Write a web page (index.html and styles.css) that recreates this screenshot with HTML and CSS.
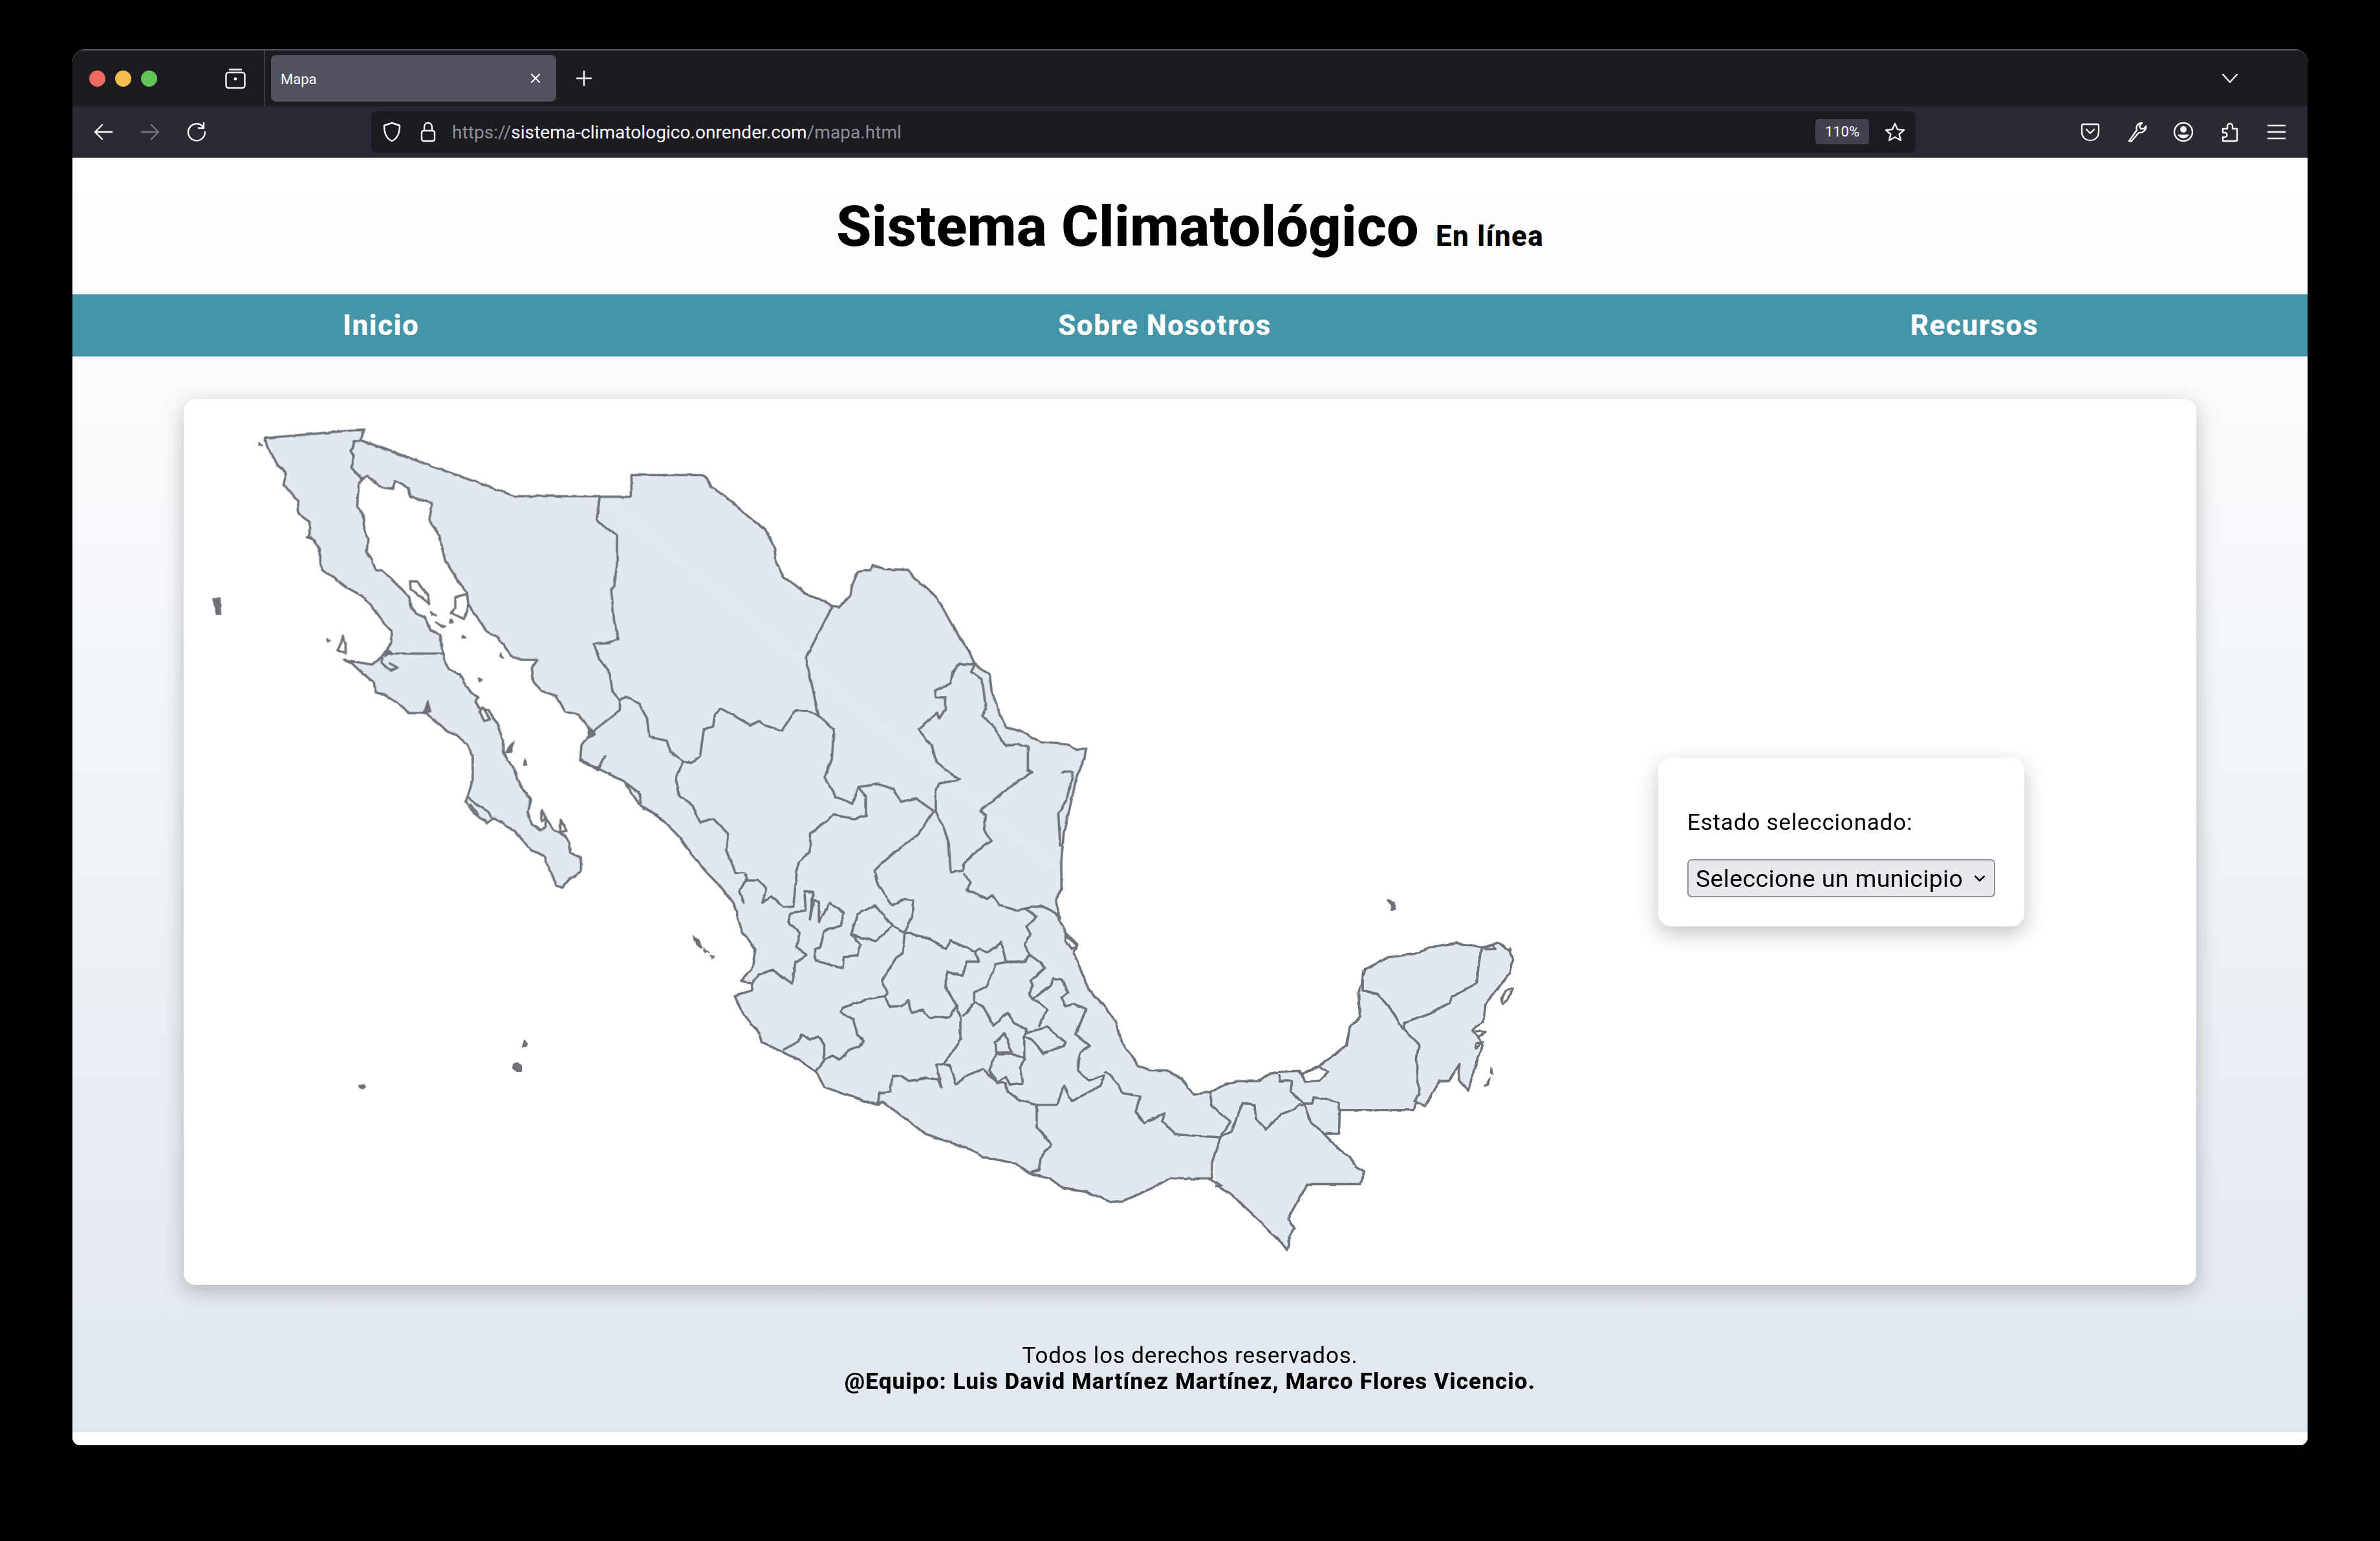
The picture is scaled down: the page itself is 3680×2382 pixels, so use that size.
FILE: index.html
```html
<!DOCTYPE html>
<html lang="es">
<head>
<meta charset="utf-8">
<title>Mapa</title>
<link rel="stylesheet" href="styles.css">
</head>
<body>
<div class="window">
  <div class="tabstrip">
    <div class="lights"><span class="light red"></span><span class="light yellow"></span><span class="light green"></span></div>
    <svg class="fxview ico" viewBox="0 0 32 32"><path d="M7 2.500h18"/><rect x="1.500" y="7" width="29" height="24" rx="4"/><circle class="solid" cx="16" cy="17" r="2.400"/></svg>
    <div class="tab-sep"></div>
    <div class="tab"><span class="tab-title">Mapa</span>
      <svg class="tab-close ico" viewBox="0 0 20 20"><path d="M4 4l12 12M16 4L4 16"/></svg></div>
    <svg class="newtab ico" viewBox="0 0 24 24"><path d="M12 1v22M1 12h22"/></svg>
    <svg class="tabs-menu ico" viewBox="0 0 24 14"><path d="M1 1l11 12L23 1"/></svg>
  </div>
  <div class="toolbar">
    <svg class="tool ico" viewBox="0 0 32 32"><path d="M29 16H4M14 5L3 16l11 11"/></svg>
    <svg class="tool ico dim" viewBox="0 0 32 32"><path d="M3 16h25M18 5l11 11-11 11"/></svg>
    <svg class="tool ico" viewBox="0 0 32 32"><path d="M26 8a13 13 0 1 0 3 8M27 2v8h-8"/></svg>
    <div class="urlbar">
      <svg class="shield ico" viewBox="0 0 28 32"><path d="M14 2l12 4c0 12-3 20-12 24C5 26 2 18 2 6z"/></svg>
      <svg class="lock ico" viewBox="0 0 24 32"><rect x="2" y="14" width="20" height="16" rx="3"/><path d="M6 14V8a6 6 0 0 1 12 0v6"/></svg>
      <div class="url"><span class="dim-text">https://</span>sistema-climatologico.onrender.com<span class="dim-text">/mapa.html</span></div>
      <div class="zoom-badge">110%</div>
      <svg class="star ico" viewBox="0 0 32 32"><path d="M16 3l4 9 10 1-7.500 6.500L25 29l-9-5-9 5 2.500-9.500L2 13l10-1z"/></svg>
    </div>
    <div class="tool-right">
      <svg class="tool ico" viewBox="0 0 32 32"><path d="M5 4h22a2 2 0 0 1 2 2v10c0 8-6 13-13 13S3 24 3 16V6a2 2 0 0 1 2-2z"/><path d="M10 12l6 6 6-6"/></svg>
      <svg class="tool ico" viewBox="0 0 32 32"><path d="M4 30L16 13c-2-6 2-11 8-11l-4 5 2 4 5 0 3-4c1 6-5 11-11 10L7 31z"/></svg>
      <svg class="tool ico" viewBox="0 0 32 32"><circle cx="16" cy="16" r="14"/><circle class="solid" cx="16" cy="12" r="5"/><path class="solid" d="M7 20h18a10 10 0 0 1-18 0z"/></svg>
      <svg class="tool ico" viewBox="0 0 32 32"><path d="M5 30h20a2 2 0 0 0 2-2V11h-7V7a4 4 0 0 0-8 0v4H5v6h3a3 3 0 0 1 0 7H5z"/></svg>
      <svg class="tool ico" viewBox="0 0 32 32"><path d="M3 6h26M3 16h26M3 26h26"/></svg>
    </div>
  </div>
  <div class="page">
    <header class="site-header">
      <h1 class="site-title">Sistema Climatológico <small class="site-sub">En línea</small></h1>
    </header>
    <nav class="site-nav"><a class="nav-link">Inicio</a><a class="nav-link">Sobre Nosotros</a><a class="nav-link">Recursos</a></nav>
    <main class="main">
      <section class="card">
        <svg class="map" viewBox="284 617 2280 1369">
          <defs>
            <filter id="rough" filterUnits="userSpaceOnUse" x="284" y="617" width="2280" height="1369">
              <feTurbulence type="fractalNoise" baseFrequency="0.07" numOctaves="2" seed="4" result="n"/>
              <feDisplacementMap in="SourceGraphic" in2="n" scale="4" xChannelSelector="R" yChannelSelector="G"/>
              <feGaussianBlur stdDeviation="0.5"/>
            </filter>
          </defs>
          <g filter="url(#rough)">
          <g transform="translate(1750 1350) scale(.44643 .39541)">
            <path class="land" d="M270 855L325 825L360 813L440 812L475 783L520 775L580 772L590 785L650 750L690 720L745 672L755 600L790 560L785 470L808 375L890 328L980 315L1050 285L1125 272L1215 292L1270 270L1310 305L1320 340L1310 390L1225 510L1218 580L1180 610L1200 640L1215 675L1185 770L1165 850L1130 805L1135 745L1100 810L1065 812L1035 875L1015 910L985 895L977 925L720 925L718 1018L665 1018L720 1080L755 1110L775 1145L805 1165L790 1215L608 1215L540 1350L563 1385L545 1420L545 1455L538 1470L440 1355L340 1250L290 1220"/>
            <path class="seaisle" d="M590 785L650 755L680 775L650 810L600 815Z"/>
            <path class="line" d="M800 380L800 460L850 470L900 535L940 610M1210 295L1200 370L1195 430L1110 480L1100 505L1030 550L945 585L940 610M940 610L995 670L985 730L995 860L977 895M510 785L515 812L555 812L550 855L595 900L625 900L630 875L680 885L715 895L718 925M305 1035L345 1005L385 895L425 905L430 960L465 1000L515 945L560 925L580 905L600 910L620 975L655 1005L665 1018M135 1185L160 1155L175 1175L205 1170L200 1190M225 1180L270 1195L310 1220L290 1225"/>
            <path class="line" d="M1225 290L1250 280L1260 295L1225 297Z"/>
            <path class="island" d="M885 105L908 115L915 140L900 145L900 125ZM1245 760L1250 785L1242 785ZM1240 800L1222 832L1235 825ZM1310 290L1315 300L1308 300Z"/>
            <path class="seaisle" d="M1320 450L1295 460L1280 490L1285 510L1305 490Z"/>
            <path class="seaisle" d="M1180 615L1225 620L1200 640ZM1190 665L1215 660L1190 685Z"/>
          </g>
          <g transform="translate(850 700) scale(.57398)">
            <path class="fill-only" d="M135 118L1378 1133L425 1133L110 755Z"/>
            <path class="land" d="M135 118H220V60H410L425 68L435 92L470 115L510 150L545 180L580 205L605 255L610 295L630 335L660 355L690 380L720 390L760 412L780 415L810 385L815 355L830 320L865 315L870 302L900 313L965 315L985 340L1040 385L1060 420L1090 475L1130 535L1145 570L1185 595L1190 640L1215 710L1230 740L1270 750L1325 780L1395 785L1420 800L1445 795L1440 825L1420 870L1400 960L1385 1020L1378 1100L1378 1133"/>
            <path class="land" d="M425 1133L385 1085L350 1035L300 985L240 945L200 885L130 850L82 830L85 790L115 748"/>
            <path class="line" d="M85 825L130 855L150 815M200 885L240 915L245 945M250 955L290 975L300 990M1380 860L1410 860L1395 930L1370 970L1375 1060"/>
            <path class="line" d="M762 412L690 552L725 710M190 665L205 655L240 675L262 715L268 765L315 775L325 805L358 832L380 835L405 815L415 745L440 735L445 705L460 688L500 710L540 733L565 722L575 733L625 748L660 695L695 695L730 712L765 745L760 825L740 875L770 925L815 945L830 900L885 892L925 905L945 940L985 930L1035 965M830 900L852 925L852 978L820 985L765 975L745 990L703 1025L700 1075L672 1100L662 1133M358 832L340 880L350 925L385 950L405 995L440 985L480 1025L475 1070L500 1130L525 1133M1145 570L1105 568L1085 590L1080 620L1040 640L1040 660L1065 660L1065 690L1050 715L1045 700L993 745L1030 790L1040 830L1075 860L1105 880L1050 890L1040 905L1040 965L1065 1020L1075 1050L1080 1130L1115 1125M1115 1125L1115 1110L1140 1080L1190 1045L1170 1015L1175 975L1160 965L1225 910L1240 900L1300 860L1288 855L1288 790L1255 785L1230 790L1190 730L1165 710L1175 690L1165 610L1135 590L1145 570M1035 965L990 1030L930 1075L890 1110L875 1125L877 1133"/>
            <path class="island" d="M385 1300L400 1310L410 1335L395 1325ZM415 1335L428 1345L418 1345ZM432 1355L442 1358L435 1362Z"/>
          </g>
          <g transform="translate(1080 1350) scale(.63776 .39541)">
            <path class="land" d="M880 0L880 60L868 100L875 180L890 230L920 280L910 310L935 410L945 450L985 520L1010 575L1025 660L1050 710L1065 750L1095 770L1135 770L1170 800L1200 865L1240 855L1245 910L1290 970L1265 1032L1245 1130L1245 1195L1215 1195L1145 1190L1100 1230L1030 1280L1000 1285L940 1245L885 1232L850 1190L800 1172L770 1135L690 1108L660 1080L550 1018L490 945L445 890L435 905L380 878L305 835L285 775L240 725L205 700L155 660L150 632L105 540L88 480L130 460L130 432L103 420L130 375L138 295L105 225L85 115L55 55L22 0"/>
            <path class="seaisle" d="M890 240L920 285L905 295L890 260Z"/>
            <path class="line" d="M435 905L438 860L465 855L470 795L490 790L510 812L555 800L580 805L590 840M205 690L240 660L250 630L270 650L290 635L305 670L305 730L285 775M305 730L325 715L342 730L365 690L390 675L400 655L385 630L375 570L345 545L350 525L415 490L450 480M450 480L465 520L490 520L510 495L517 545L545 535L560 565L610 560L625 520L635 560M635 560L635 650L595 745L578 750L585 810L590 840M595 745L610 750L625 825L650 790L690 765L725 818L745 820L750 855L775 885L820 905M820 905L820 990L855 1060L830 1110L825 1160L800 1172M722 705L705 770L725 818L745 795L755 825L785 820L780 760L790 725L760 705ZM720 660L742 625L760 700L722 700ZM670 505L640 560M670 505L690 520L715 595L750 545L765 585L795 610L790 640L790 725M795 625L845 600L890 660L885 675L835 705L810 650L790 640M670 505L670 465L700 440L720 355L750 345L790 345L800 315L830 350L840 370L805 420L810 440L800 470L810 490L855 435L860 410L880 415L895 465L880 485L890 520L910 510L940 530L915 630L950 675L925 700L920 770L945 810L985 790L975 830L935 865L905 890L885 830L870 905L820 905M810 490L830 510L845 530L825 600M985 775L1000 790L1030 860L1070 870L1060 935L1080 975L1130 940L1125 965L1155 1020L1265 1032M112 0L118 22L100 65L110 120M112 28L145 28L165 60L155 112L178 90L205 132L230 130L238 0M643 0L660 35L650 65L700 100L712 85L730 125L770 145L830 125L865 155L880 180M790 135L820 170L795 210L805 240L790 280L800 310M430 0L435 45L470 125L500 100L520 105L518 170L500 232M370 240L385 160L428 125L470 205L430 265L390 250ZM470 205L500 232M222 155L260 145L257 72L278 75L270 180L280 105L292 110L292 190L318 115L352 155L345 205L305 225L295 290L283 295L283 340L350 372L352 325L385 320L392 280L378 250L370 240M222 155L218 190L245 235L237 290L263 320L235 345L228 432L180 377L145 395L130 430M500 232L495 310L475 340L445 420L458 465L450 482M500 232L525 240L560 255L600 295L610 262L670 305L680 345L650 345L640 400L605 385L597 440L625 515L635 560M672 305L680 292L700 310L735 270L745 345L770 350L795 345L800 312"/>
          </g>
          <g transform="translate(300 620) scale(.44643 .48469)">
            <path class="land" d="M245 118L590 90L582 110L575 125L555 128L550 150L542 158L553 175L550 200L545 210L560 225L580 250L570 270L565 335L585 365L590 410L602 440L598 480L615 505L630 540L650 540L720 600L745 625L750 655L775 680L800 690L820 730L855 745L855 775L865 805L870 835L885 855L920 870L945 910L960 930L985 945L975 960L990 980L1020 985L1050 1030L1070 1080L1070 1120L1105 1170L1130 1225L1165 1270L1155 1310L1170 1350L1200 1370L1215 1360L1220 1335L1250 1370L1285 1385L1300 1410L1305 1440L1340 1455L1340 1500L1300 1525L1275 1552L1255 1545L1240 1510L1215 1455L1165 1430L1110 1370L1040 1330L1015 1345L970 1315L940 1280L965 1210L965 1130L945 1095L910 1065L880 1055L820 1010L805 995L755 995L745 995L700 960L660 935L630 930L620 895L580 865L545 835L520 825L615 840L650 815L685 770L685 735L660 710L625 665L580 620L530 595L480 560L445 540L435 515L435 470L400 430L400 385L362 360L360 320L310 265L320 230L290 205L270 170L255 150Z"/>
            <path class="line" d="M680 805H865M945 1260L985 1290L1020 1310L1030 1330M955 1285L985 1320M650 815L650 835L680 860L705 850L675 835"/>
            <path class="island" d="M795 995L810 955L820 990ZM400 430L420 445L390 435ZM1075 1120L1110 1085L1100 1120ZM670 790L685 800L660 815Z"/>
            <path class="seaisle" d="M515 750L525 775L525 805L497 795L510 770ZM748 575L775 575L810 620L815 650L790 625L750 600ZM1000 975L1025 1015L1005 1020L990 990ZM1205 1305L1220 1330L1205 1340ZM1270 1335L1290 1370L1268 1375Z"/>
            <path class="island" d="M65 630L90 630L92 680L78 680L70 650ZM225 132L235 142L225 140ZM460 758L472 762L462 766ZM890 695L900 705L885 710ZM930 747L940 755L928 755ZM1060 805L1072 820L1060 815ZM985 885L998 890L988 895ZM1145 1140L1155 1160L1142 1160ZM835 705L870 720L860 722ZM820 670L840 685L825 680Z"/>
            <path class="land" d="M1405 303L1395 380L1430 405L1465 430L1465 520L1455 595L1445 600L1455 700L1470 760L1435 772L1385 775L1400 815L1440 870L1450 930L1475 955L1475 985L1380 1055L1370 1045L1330 1000L1285 990L1255 940L1205 925L1175 895L1170 850L1190 825L1135 825L1100 815L1055 755L1015 735L950 650L945 610L920 580L870 510L850 430L815 380L825 325L750 305L740 275L695 255L690 280L650 275L600 240L580 250L560 225L545 210L550 200L553 175L542 158L550 150L555 128L578 125L1110 303Z"/>
            <path class="seaisle" d="M905 625L945 615L950 650L935 695L890 675L905 660Z"/>
            <path class="island" d="M1370 1040L1390 1065L1365 1075Z"/>
          </g>
          </g>
          <path class="island" d="M811 1608l4 5-1 4-6 1zM794 1645l6-2 6 4 0 9-7 0-6-5zM555 1678l8-1 2 3-4 3-5-2z"/>
        </svg>
        <aside class="panel">
          <label class="panel-label" for="mun">Estado seleccionado:</label>
          <div class="select-wrap">
            <select class="select" id="mun"><option>Seleccione un municipio</option></select>
            <svg class="select-arrow ico-dark" viewBox="0 0 16 10"><path d="M2 2l6 6 6-6"/></svg>
          </div>
        </aside>
      </section>
    </main>
    <footer class="site-footer">
      <div class="rights">Todos los derechos reservados.</div>
      <strong class="team">@Equipo: Luis David Martínez Martínez, Marco Flores Vicencio.</strong>
    </footer>
  </div>
  <div class="page-end"></div>
</div>
</body>
</html>
```
FILE: styles.css
```css
* { box-sizing: border-box; }
html, body { margin: 0; height: 100%; background: #000; }
body { padding: 76px 112px 148px; font-family: Roboto, "Liberation Sans", sans-serif; color: #000; }
.window { height: 2158px; border-radius: 20px 20px 12px 12px; overflow: hidden; background: #fff; display: flex; flex-direction: column; }
.ico { fill: none; stroke: #fbfbfe; stroke-width: 2.400; stroke-linecap: round; stroke-linejoin: round; flex: none; }
.ico .solid { fill: #fbfbfe; stroke: none; }
.ico.dim { stroke: #77767f; }
.tabstrip { height: 88px; background: #1c1b22; border-top: 2px solid #5b5b60; display: flex; align-items: center; flex: none; }
.lights { display: flex; gap: 15px; margin-left: 26px; width: 210px; }
.light { width: 25px; height: 25px; border-radius: 50%; }
.red { background: #ee6a5e; }
.yellow { background: #f5bd4f; }
.green { background: #61c454; }
.fxview { width: 32px; height: 32px; margin-right: 28px; }
.tab-sep { width: 1px; align-self: stretch; background: #55545c; margin-right: 10px; }
.tab { width: 441px; height: 72px; background: #52525e; border-radius: 8px; display: flex; align-items: center; justify-content: space-between; padding: 0 22px 0 15px; color: #fbfbfe; font-size: 22px; }
.tab-title { padding-top: 3px; }
.tab-close { width: 20px; height: 20px; }
.newtab { width: 24px; height: 24px; margin-left: 31px; }
.tabs-menu { width: 24px; height: 14px; margin-left: auto; margin-right: 108px; }
.toolbar { height: 80px; background: #2b2a33; display: flex; align-items: center; padding-left: 32px; gap: 40px; flex: none; border-bottom: 1px solid #55545c; }
.tool { width: 32px; height: 32px; }
.urlbar { width: 2388px; height: 64px; margin-left: 214px; background: #1c1b22; border-radius: 8px; display: flex; align-items: center; padding-left: 18px; }
.shield { width: 28px; height: 32px; }
.lock { width: 24px; height: 32px; margin-left: 30px; }
.url { margin-left: 25px; font-size: 28px; letter-spacing: .06px; padding-top: 2px; color: #fbfbfe; white-space: nowrap; flex: 1; }
.dim-text { color: #8f8f98; }
.zoom-badge { width: 83px; height: 39px; background: #42414d; border-radius: 5px; color: #fbfbfe; font-size: 22px; display: flex; align-items: center; justify-content: center; }
.star { width: 32px; height: 32px; margin: 0 16px 0 24px; }
.tool-right { display: flex; gap: 40px; margin-left: 214px; }
.page { flex: 1; display: flex; flex-direction: column; background: linear-gradient(#fff, #e2e8f0); }
.page-end { height: 20px; background: #fff; flex: none; }
.site-header { height: 211px; display: flex; align-items: center; justify-content: center; }
.site-title { margin: 0; font-size: 88px; font-weight: 800; line-height: 1; letter-spacing: .25px; }
.site-sub { font-size: 44px; font-weight: 800; margin-left: 4px; letter-spacing: 1.300px; }
.site-nav { height: 96px; background: #4495a7; display: flex; align-items: center; justify-content: space-between; padding: 0 416px 0 418px; }
.nav-link { color: #fff; font-size: 44px; font-weight: 800; letter-spacing: 1.500px; }
.main { padding: 66px 172px 0; }
.card { height: 1369px; background: #fff; border-radius: 18px; box-shadow: 0 9px 33px rgba(0,0,0,.24); display: flex; align-items: center; }
.map { width: 2280px; height: 1369px; flex: none; display: block; }
.land { fill: #e2e8f0; stroke: #6d7378; stroke-width: 3.600; stroke-linejoin: round; vector-effect: non-scaling-stroke; }
.fill-only { fill: #e2e8f0; }
.line { fill: none; stroke: #6d7378; stroke-width: 3.600; stroke-linejoin: round; vector-effect: non-scaling-stroke; }
.island { fill: #6d7378; stroke: #6d7378; stroke-width: 2; stroke-linejoin: round; vector-effect: non-scaling-stroke; }
.seaisle { fill: #fff; stroke: #6d7378; stroke-width: 3.600; stroke-linejoin: round; vector-effect: non-scaling-stroke; }
.panel { width: 566px; height: 261px; background: #fff; border-radius: 20px; box-shadow: 0 11px 33px rgba(0,0,0,.24); padding: 79px 45px 0; }
.panel-label { display: block; font-size: 35px; letter-spacing: .8px; line-height: 44px; margin-bottom: 34px; }
.select-wrap { position: relative; width: 476px; height: 59px; }
.select { appearance: none; width: 100%; height: 100%; background: #e9e9ed; border: 2px solid #8f8f9d; border-radius: 7px; padding: 0 0 0 11px; font: inherit; font-size: 37.500px; letter-spacing: .35px; color: #000; }
.select-arrow { position: absolute; right: 15px; top: 24px; width: 18px; height: 12px; }
.ico-dark { fill: none; stroke: #000; stroke-width: 2.500; stroke-linecap: round; stroke-linejoin: round; }
.site-footer { text-align: center; font-size: 35px; line-height: 40px; padding-top: 90px; }
.rights { letter-spacing: .8px; }
.team { display: block; font-weight: 800; letter-spacing: 1.100px; }
```
